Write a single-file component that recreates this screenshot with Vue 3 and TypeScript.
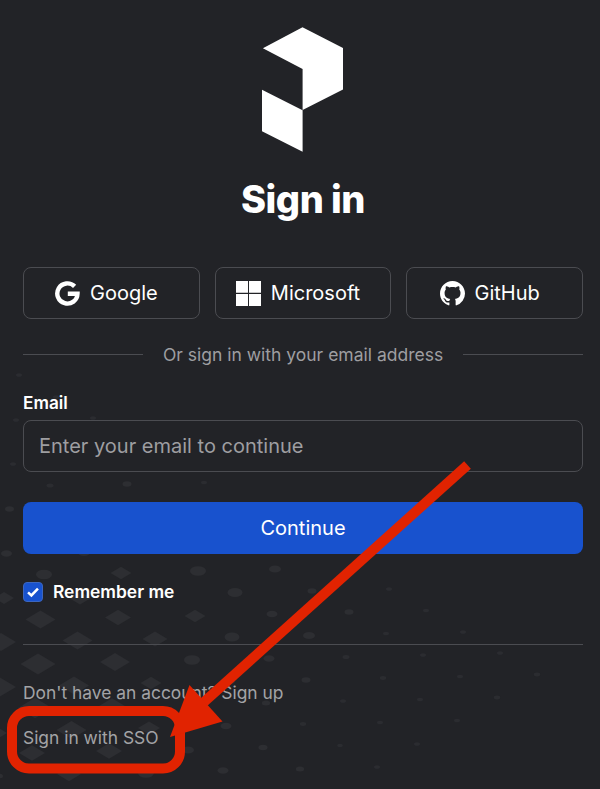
<script setup lang="ts">
interface Provider {
  id: 'google' | 'microsoft' | 'github'
  label: string
}
const providers: Provider[] = [
  { id: 'google', label: 'Google' },
  { id: 'microsoft', label: 'Microsoft' },
  { id: 'github', label: 'GitHub' },
]

// Background lattice: centre x, centre y, half width
const marks: [number, number, number][] = [
  [19, 375, 3], [56, 397, 3], [16, 420, 3], [93, 418, 3], [13, 464, 3],
  [50, 485.5, 3.5], [127, 484, 4.5], [204, 482.5, 3], [9.5, 509, 4.5],
  [6.5, 553.5, 5.5], [84, 552.5, 6], [44, 574.5, 8], [121, 573, 10.5],
  [198, 571, 8], [275, 569, 6], [4, 598, 10], [80, 598, 11], [158, 594, 9],
  [235, 592.5, 7.5], [312, 591, 4.5], [389, 589, 3], [40.5, 619.5, 15],
  [118, 617.5, 13], [195, 616, 10.5], [272, 614, 5.5], [349, 612, 4.5],
  [426, 610.5, 3], [1, 642, 15], [77.5, 640.5, 15], [155, 639, 12.5],
  [232, 637, 7.5], [309, 635.5, 6], [386, 633.5, 3], [463, 632, 3],
  [38, 664, 17.5], [115, 662, 15], [192, 660, 8], [269, 658.5, 5.5],
  [346, 657, 3.5], [423, 655, 3], [500, 653, 3], [-1, 687, 17],
  [74, 685.5, 15], [151, 683, 10.5], [229, 681, 6], [306, 680, 4.5],
  [383, 678, 3.2], [460, 676.5, 3], [537, 674.5, 3.2], [35, 708, 17],
  [112, 706, 13], [266, 703, 4.2], [343, 701, 3], [420, 699.5, 3],
  [497, 697.5, 3.2], [-6, 733, 13], [71.5, 730, 15], [149, 728, 11],
  [226, 726, 5.5], [303, 724, 3.2], [380, 722.5, 3], [457, 720.5, 3],
  [32, 753, 13], [109, 751, 13], [188, 750, 6], [263, 747.5, 4.5],
  [340, 745.5, 2.8], [417, 744, 3], [-1, 776, 4], [69, 774, 12],
  [146, 773, 8], [223, 770.5, 5.5], [300, 769, 4.2], [377, 767, 3],
]
const diamond = (x: number, y: number, w: number): string => {
  const h = w * 0.6
  return `M${x - w} ${y}L${x} ${y - h}L${x + w} ${y}L${x} ${y + h}Z`
}
</script>

<template>
  <main class="page">
    <svg class="backdrop" viewBox="0 0 600 789" aria-hidden="true">
      <template v-for="([x, y, w], i) in marks" :key="i">
        <path v-if="w > 8.5" :d="diamond(x, y, w)" />
        <ellipse v-else :cx="x" :cy="y" :rx="w" :ry="w * 0.6" :class="{ faint: w < 4 }" />
      </template>
    </svg>

    <div class="content">
      <svg class="logo" viewBox="0 0 82 126" aria-hidden="true">
        <path d="M.9 21.2 40.5.3 81 21v41.5L40.6 83V42ZM0 62.7l40.6 20.5v41.6L0 104.2Z" />
      </svg>
      <h1>Sign in</h1>

      <div class="providers">
        <button v-for="p in providers" :key="p.id" type="button" class="provider">
          <svg v-if="p.id === 'google'" class="icon" viewBox="0 0 25 25">
            <path class="g" d="M19.6 5.4A10.1 10.1 0 1 0 22.5 12.7H12.8" />
          </svg>
          <svg v-else-if="p.id === 'microsoft'" class="icon" viewBox="0 0 25 25">
            <path d="M0 0h12v11.8H0ZM13 0h12v11.8H13ZM0 13h12v12H0ZM13 13h12v12H13Z" />
          </svg>
          <svg v-else class="icon" viewBox="0 0 16 16">
            <path d="M8 0C3.58 0 0 3.58 0 8c0 3.54 2.29 6.53 5.47 7.59.4.07.55-.17.55-.38 0-.19-.01-.82-.01-1.49-2.01.37-2.53-.49-2.69-.94-.09-.23-.48-.94-.82-1.13-.28-.15-.68-.52-.01-.53.63-.01 1.08.58 1.23.82.72 1.21 1.87.87 2.33.66.07-.52.28-.87.51-1.07-1.78-.2-3.64-.89-3.64-3.95 0-.87.31-1.59.82-2.15-.08-.2-.36-1.02.08-2.12 0 0 .67-.21 2.2.82.64-.18 1.32-.27 2-.27s1.36.09 2 .27c1.53-1.04 2.2-.82 2.2-.82.44 1.1.16 1.92.08 2.12.51.56.82 1.27.82 2.15 0 3.07-1.87 3.75-3.65 3.95.29.25.54.73.54 1.48 0 1.07-.01 1.93-.01 2.2 0 .21.15.46.55.38A8.01 8.01 0 0 0 16 8c0-4.42-3.58-8-8-8Z" />
          </svg>
          <span>{{ p.label }}</span>
        </button>
      </div>

      <div class="divider"><span>Or sign in with your email address</span></div>

      <label class="label" for="email">Email</label>
      <input id="email" class="field" type="email" placeholder="Enter your email to continue" />
      <button type="button" class="submit">Continue</button>

      <div class="remember">
        <span class="check">
          <svg viewBox="0 0 20 20"><path d="M4.5 10.4 8.2 13.8 15.5 6.2" /></svg>
        </span>
        <span class="remember-text">Remember me</span>
      </div>

      <footer class="links">
        <p>Don't have an account? <a>Sign up</a></p>
        <p><a>Sign in with SSO</a></p>
      </footer>
    </div>

    <svg class="annotation" viewBox="0 0 600 789" aria-hidden="true">
      <rect x="12" y="711" width="168" height="57.5" rx="17" />
      <path class="shaft" d="M467.5 465 204 702" />
      <path class="head" d="M170 737 189.5 685 222.5 721.5Z" />
    </svg>
  </main>
</template>

<style>
body {
  background: #222327;
}
</style>

<style scoped>
.page {
  position: relative;
  height: 789px;
  overflow: hidden;
  background: #222327;
  color: #fff;
  font-family: Inter, "Liberation Sans", sans-serif;
}
.backdrop,
.annotation {
  position: absolute;
  top: 0;
  left: 0;
  width: 600px;
  height: 789px;
  pointer-events: none;
}
.backdrop {
  fill: #2d2e32;
}
.faint {
  opacity: 0.85;
}
.content {
  position: relative;
  display: flex;
  flex-direction: column;
  padding: 27px 17px 0 23px;
}
.logo {
  width: 82px;
  height: 126px;
  align-self: center;
  fill: #fff;
}
h1 {
  margin: 22px 0 0;
  height: 48px;
  line-height: 48px;
  font-size: 38px;
  font-weight: 800;
  letter-spacing: -0.5px;
  text-align: center;
}
.providers {
  display: grid;
  grid-template-columns: repeat(3, 1fr);
  gap: 15px;
  margin-top: 44px;
}
button,
input {
  box-sizing: border-box;
  height: 52px;
  border-radius: 8px;
  font-family: inherit;
  font-size: 20px;
}
.provider {
  display: flex;
  align-items: center;
  justify-content: center;
  gap: 10px;
  padding: 0 10px 0 0;
  border: 1px solid #4b4c51;
  background: #222327;
  color: #fff;
}
.icon {
  width: 25px;
  height: 25px;
  fill: #fff;
}
.icon .g {
  fill: none;
  stroke: #fff;
  stroke-width: 4.4;
}
.divider {
  display: flex;
  align-items: center;
  gap: 20px;
  height: 23px;
  margin-top: 24px;
  color: #9e9ea1;
  font-size: 17.5px;
}
.divider::before,
.divider::after {
  content: "";
  flex: 1;
  height: 1px;
  background: #4b4c51;
}
.label {
  margin-top: 25px;
  height: 24px;
  line-height: 24px;
  font-size: 17.2px;
  font-weight: 600;
}
.field {
  margin-top: 5px;
  padding: 0 15px;
  border: 1px solid #4b4c51;
  background: #222327;
  color: #fff;
}
.field::placeholder {
  color: #9e9ea1;
  opacity: 1;
}
.submit {
  margin-top: 30px;
  border: 0;
  background: #1852ce;
  color: #fff;
}
.remember {
  display: flex;
  align-items: center;
  gap: 10px;
  height: 24px;
  margin-top: 26px;
  font-size: 17.4px;
  font-weight: 600;
}
.remember-text {
  padding-bottom: 2px;
}
.check {
  box-sizing: border-box;
  width: 20px;
  height: 20px;
  border: 1px solid #3c66be;
  border-radius: 4px;
  background: #1852ce;
}
.check svg {
  display: block;
  width: 18px;
  height: 18px;
  fill: none;
  stroke: #fff;
  stroke-width: 2.8;
}
.links {
  margin-top: 40px;
  padding-top: 36px;
  border-top: 1px solid #4b4c51;
  color: #a3a3a6;
  font-size: 17.4px;
  line-height: 24px;
}
.links p {
  margin: 0 0 21px;
}
.annotation {
  fill: none;
  stroke: #e12301;
  stroke-width: 10;
}
.annotation .head {
  fill: #e12301;
  stroke: none;
}
</style>
